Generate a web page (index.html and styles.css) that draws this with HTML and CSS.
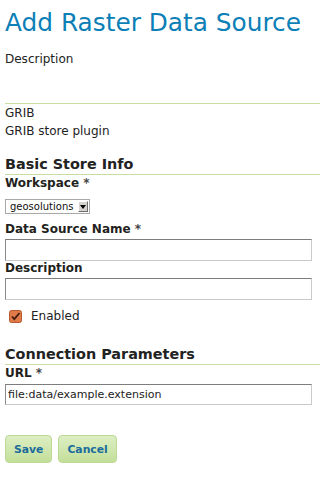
FILE: index.html
```html
<!DOCTYPE html>
<html>
<head>
<meta charset="utf-8">
<link rel="stylesheet" href="styles.css">
</head>
<body>
<h1 class="title">Add Raster Data Source</h1>
<p class="desc">Description</p>
<div class="info">
  <div>GRIB</div>
  <div>GRIB store plugin</div>
</div>
<form class="form">
  <h2 class="section section-basic">Basic Store Info</h2>
  <label class="label label-ws">Workspace <span class="req">*</span></label>
  <div class="select">
    <span class="select-text">geosolutions</span>
    <span class="select-btn"><svg width="6" height="4" viewBox="0 0 6 4"><path d="M0 0h6L3 4z" fill="#000"/></svg></span>
  </div>
  <label class="label label-name">Data Source Name <span class="req">*</span></label>
  <input class="field" type="text">
  <label class="label label-desc">Description</label>
  <input class="field" type="text">
  <div class="check-row">
    <svg class="check" width="13" height="13" viewBox="0 0 13 13">
      <rect x="0.5" y="0.5" width="12" height="12" rx="2" fill="#e07a48" stroke="#b7592c"/>
      <path d="M3 6.5l2.3 2.6L10.5 3" fill="none" stroke="#3f1d0e" stroke-width="1.7"/>
    </svg>
    <span>Enabled</span>
  </div>
  <h2 class="section section-conn">Connection Parameters</h2>
  <label class="label label-url">URL <span class="req">*</span></label>
  <input class="field field-url" type="text" value="file:data/example.extension">
  <div class="buttons">
    <button type="button" class="btn">Save</button>
    <button type="button" class="btn">Cancel</button>
  </div>
</form>
</body>
</html>
```
FILE: styles.css
```css
html, body {
  margin: 0;
  padding: 0;
  background: #fff;
}
body {
  padding-left: 5px;
  font-family: "DejaVu Sans", sans-serif;
  font-size: 12px;
  color: #222;
}
.title {
  margin: 8px 0 0 0;
  font-size: 24.8px;
  line-height: 29px;
  font-weight: normal;
  color: #0b7fb6;
}
.desc {
  margin: 15px 0 0 0;
  line-height: 14px;
}
.info {
  margin-top: 37px;
  border-top: 1px solid #c6dda3;
  line-height: 18px;
}
.form {
  margin: 0;
  display: flex;
  flex-direction: column;
  align-items: flex-start;
}
.section {
  align-self: stretch;
  margin: 0;
  font-size: 14.4px;
  line-height: 17px;
  font-weight: bold;
  color: #222;
  padding-bottom: 1px;
  border-bottom: 1px solid #c6dda3;
}
.section-basic { margin-top: 16px; }
.section-conn { margin-top: 23px; }
.label {
  display: block;
  font-weight: bold;
  line-height: 14px;
  color: #231f20;
}
.req { color: #444; }
.label-ws { margin-top: 1px; }
.label-name { margin-top: 8px; }
.label-desc { margin-top: 0; }
.label-url { margin-top: 1px; }
.select {
  margin-top: 9px;
  box-sizing: border-box;
  width: 85px;
  height: 15px;
  border: 1px solid #a8a8a8;
  display: flex;
  align-items: center;
  justify-content: space-between;
  padding: 0 1px 0 4px;
  font-size: 10px;
  color: #111;
}
.select-text { line-height: 13px; }
.select-btn {
  box-sizing: border-box;
  width: 10px;
  height: 11px;
  background: #d6d3ce;
  border: 1px solid;
  border-color: #fff #6e6e6e #6e6e6e #fff;
  display: flex;
  align-items: center;
  justify-content: center;
}
.field {
  margin: 3px 0 0 0;
  box-sizing: border-box;
  width: 307px;
  height: 22px;
  border: 1px solid;
  border-color: #7d7d7d #cacaca #cacaca #8a8a8a;
  padding: 0 2px;
  font-family: "DejaVu Sans", sans-serif;
  font-size: 11px;
  color: #222;
  background: #fff;
}
.field-url {
  margin-top: 4px;
  height: 21px;
}
.check-row {
  margin-top: 9px;
  display: flex;
  align-items: center;
  height: 14px;
  line-height: 14px;
  padding-left: 4px;
  gap: 9px;
}
.check { display: block; }
.buttons {
  margin-top: 30px;
  display: flex;
  gap: 6px;
}
.btn {
  height: 28px;
  padding: 0 8px;
  border: 1px solid #bcd996;
  border-radius: 4px;
  background: linear-gradient(#ddeec3, #c3df99);
  font-family: "DejaVu Sans", sans-serif;
  font-size: 10.8px;
  font-weight: bold;
  color: #1b6c9c;
}
```
